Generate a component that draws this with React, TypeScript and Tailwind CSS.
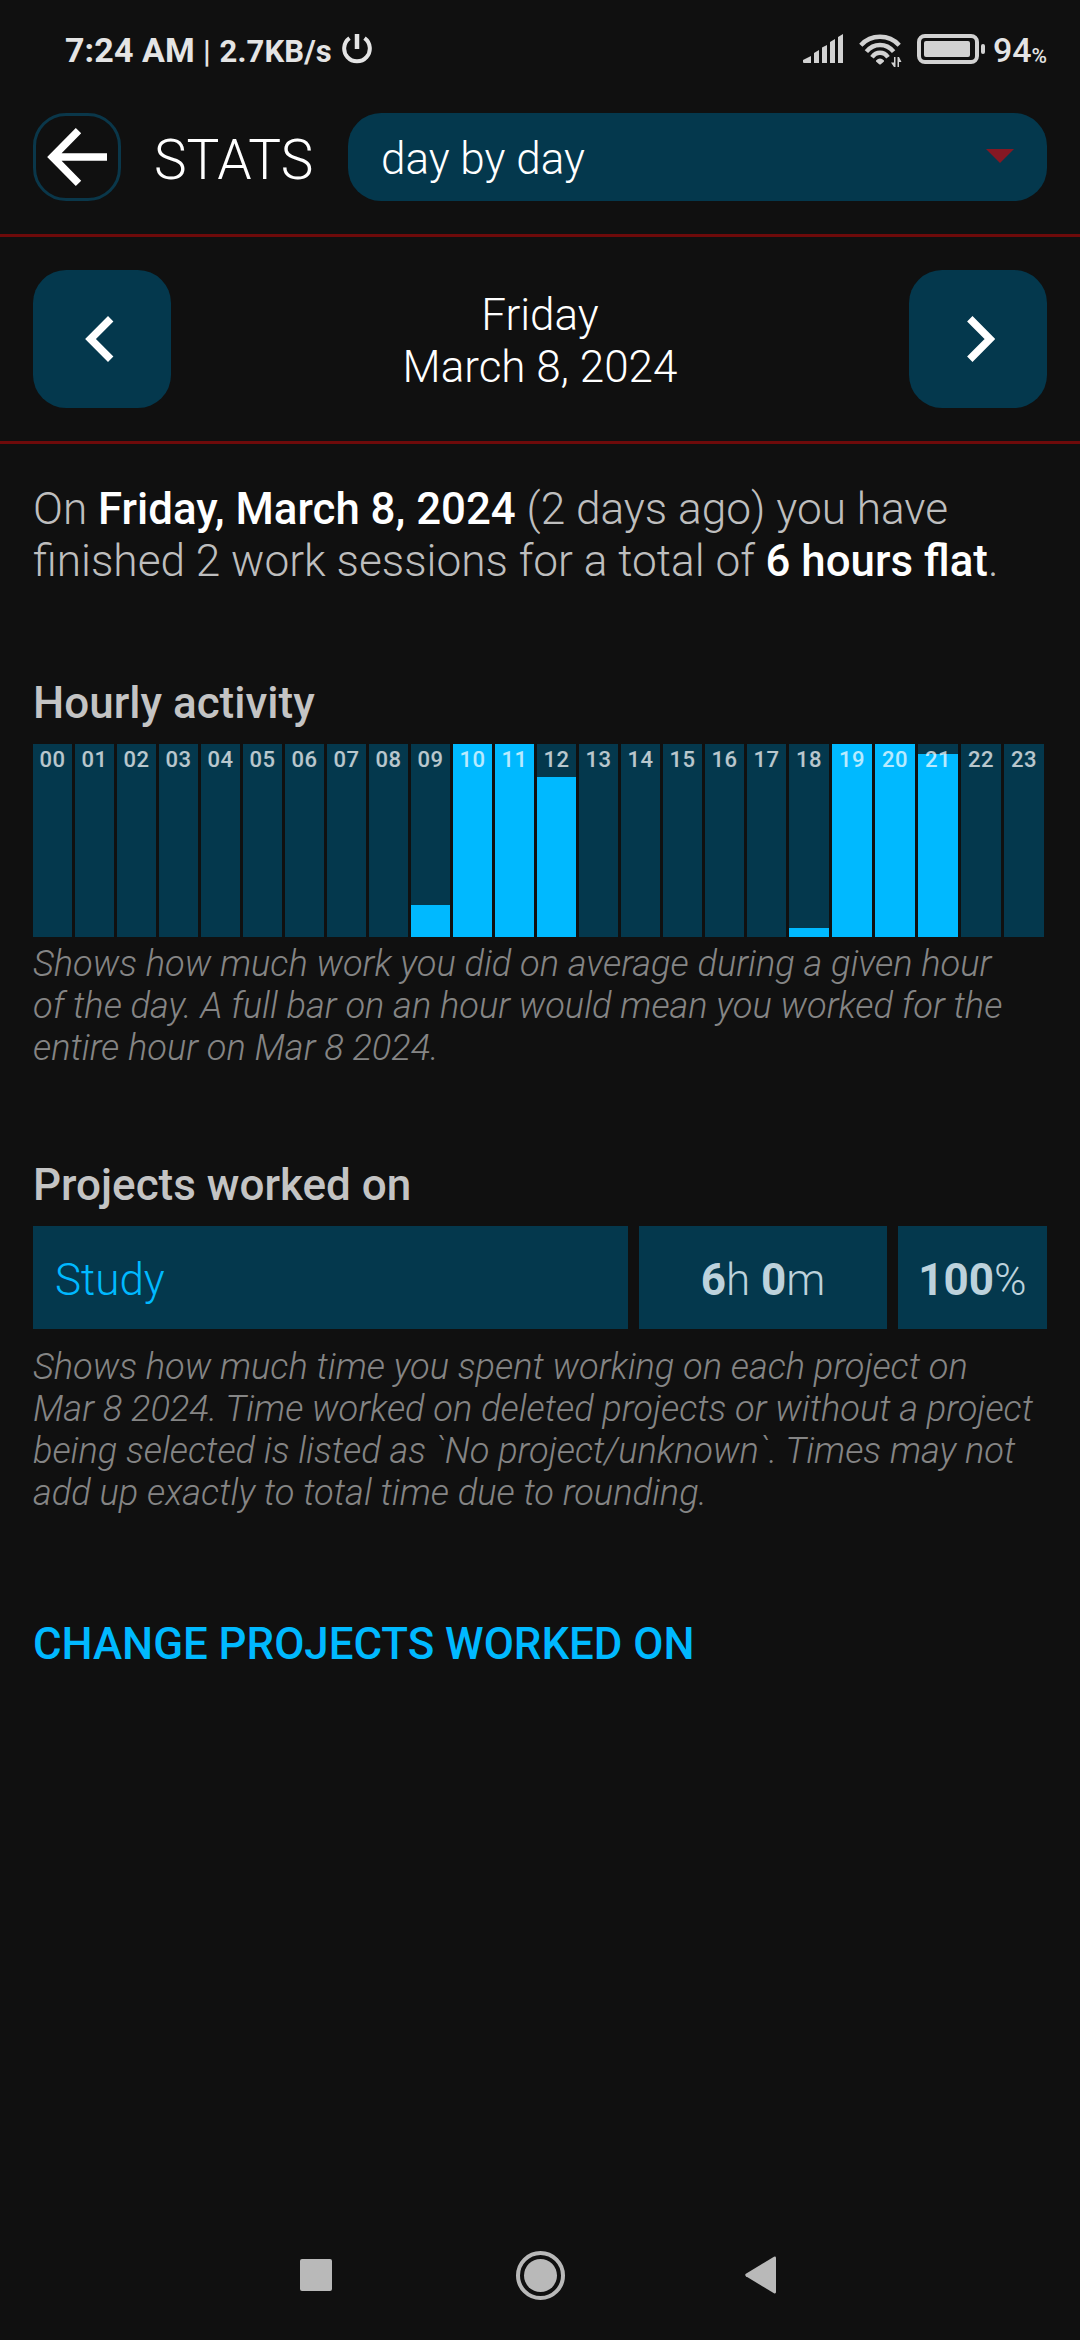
import type { ReactNode } from 'react';

// time worked in each hour, in px of the 193px tall bar
const worked: Record<number, number> = { 9: 32, 10: 193, 11: 193, 12: 160, 18: 9, 19: 193, 20: 193, 21: 183 };

const hours = Array.from({ length: 24 }, (_, i) => ({
  label: String(i).padStart(2, '0'),
  filled: worked[i] ?? 0,
}));

function StatusBar() {
  return (
    <div className="flex h-[113px] items-start justify-between pl-[65px] pr-[33px] text-[#e4e4e4]">
      <div className="flex h-[100px] items-center">
        <span className="text-[34px] font-bold leading-[40px] tracking-[0.1px]">7:24 AM</span>
        <span className="ml-[8px] mt-[3px] text-[31px] font-medium leading-[40px]">|</span>
        <span className="ml-[9px] mt-[3px] text-[31px] font-bold leading-[40px] tracking-[0.1px]">2.7KB/s</span>
        <svg
          className="-mt-[2px] ml-[10px] h-[30px] w-[30px]"
          viewBox="0 0 30 30"
          fill="none"
          stroke="#e4e4e4"
          strokeWidth="4"
        >
          <path d="M7.5 4.2A12.8 12.8 0 1 0 22.5 4.2" />
          <path d="M15 0V15" strokeWidth="4.5" />
        </svg>
      </div>

      <div className="flex h-[100px] items-center">
        <svg className="-mt-[2px] h-[30px] w-10" viewBox="0 0 40 30" fill="#d2d2d2">
          <path d="M0 26L8 22V29H1Q0 29 0 28ZM11 19L16 16V29H11ZM19 13.5L24 11V29H19ZM27 8L32 5V29H27ZM35 3L40 0V29H35Z" />
        </svg>
        <svg className="ml-[15px] mt-[2px] h-[36px] w-[44px]" viewBox="0 0 44 36" fill="none" stroke="#d2d2d2" strokeWidth="4.4">
          <path d="M2.8 12.2Q10.5 3.8 22 3.8T41.2 12.2" />
          <path d="M8.4 18.6Q14 12 22 12T35.6 18.6" />
          <path d="M14 24.2Q17.2 19.8 22 19.8T30 24.2" />
          <path d="M18 27.5Q22 23.5 26 27.5V28.5L22.8 31.2Q22 32 21.2 31.2L18 28.5Z" fill="#d2d2d2" stroke="none" />
          <path d="M37.5 24V34H36L33 29.5H36V24ZM39.5 34V24H41L43.5 29H41V34Z" fill="#d2d2d2" stroke="none" />
        </svg>
        <svg className="-mt-[2px] ml-[15px] h-[30px] w-[68px]" viewBox="0 0 68 30">
          <rect x="2" y="2" width="58" height="26" rx="6" fill="none" stroke="#d2d2d2" strokeWidth="4" />
          <rect x="7" y="7" width="46" height="16" rx="2" fill="#d2d2d2" />
          <rect x="64" y="10" width="4" height="10" rx="2" fill="#d2d2d2" />
        </svg>
        <span className="ml-2 text-[34px] font-medium leading-[40px]">94</span>
        <span className="mt-[11px] text-[21px] font-medium leading-[24px]">%</span>
      </div>
    </div>
  );
}

function Header() {
  return (
    <div className="flex h-[124px] items-start border-b-[3px] border-[#6e0a0a] px-[33px]">
      <button className="flex h-[88px] w-[88px] items-center justify-center rounded-[33px] border-[3px] border-[#0a374a]">
        <svg className="h-[58px] w-[60px]" viewBox="0 0 60 58" fill="none" stroke="#fff" strokeWidth="7.6">
          <path d="M31.5 2.7L5.5 29L31.5 55.3M5 29H60" />
        </svg>
      </button>
      <h1 className="ml-[33px] w-[194px] text-[55px] font-light leading-[94px]">STATS</h1>
      <div className="flex h-[88px] flex-1 items-center justify-between rounded-[33px] bg-[#04384d] px-[33px]">
        <span className="pt-1 text-[44px] font-light leading-[52px]">day by day</span>
        <svg className="-mt-[2px] h-[14px] w-[28px]" viewBox="0 0 28 14" fill="#851823">
          <path d="M0 0H28L14 14Z" />
        </svg>
      </div>
    </div>
  );
}

function DayButton({ path }: { path: string }) {
  return (
    <button className="flex h-[138px] w-[138px] items-center justify-center rounded-[33px] bg-[#04384d]">
      <svg className="h-[46px] w-[34px]" viewBox="0 0 34 46" fill="none" stroke="#fff" strokeWidth="7.6">
        <path d={path} />
      </svg>
    </button>
  );
}

function DayPicker() {
  return (
    <div className="flex h-[207px] items-center justify-between border-b-[3px] border-[#6e0a0a] px-[33px]">
      <DayButton path="M25.7 2.7L5.5 23L25.7 43.3" />
      <p className="pt-1 text-center text-[44px] font-light leading-[52px]">
        Friday
        <br />
        March 8, 2024
      </p>
      <DayButton path="M8.8 2.7L29 23L8.8 43.3" />
    </div>
  );
}

function Heading({ children }: { children: ReactNode }) {
  return <h2 className="text-[44px] font-medium leading-[52px] text-[#c4c4c4]">{children}</h2>;
}

function Caption({ children }: { children: ReactNode }) {
  return <p className="whitespace-nowrap text-[36.2px] font-light italic leading-[42px] text-[#858585]">{children}</p>;
}

function HourlyChart() {
  return (
    <div className="mt-[15px] flex h-[193px] gap-[3px]">
      {hours.map((hour, i) => (
        <div
          key={hour.label}
          className={`relative flex flex-col justify-end bg-[#04384d] ${i < 18 ? 'w-[39px]' : 'w-[40px]'}`}
        >
          <div className="bg-[#00b9ff]" style={{ height: hour.filled }} />
          <span className="absolute inset-x-0 top-[3px] text-center text-[22px] font-medium leading-[26px] tracking-[0.6px] text-white/72">
            {hour.label}
          </span>
        </div>
      ))}
    </div>
  );
}

function ProjectRow() {
  return (
    <div className="mt-[15px] flex h-[103px] gap-[11px] text-[44px] font-light leading-[52px] text-[#bdd2dc]">
      <div className="flex w-[595px] items-center bg-[#04384d] pl-[22px] pt-1 text-[#00b9ff]">Study</div>
      <div className="flex w-[248px] items-center justify-center bg-[#04384d] pt-1">
        <p>
          <b className="font-bold">6</b>h <b className="font-bold">0</b>m
        </p>
      </div>
      <div className="flex w-[149px] items-center justify-center bg-[#04384d] pt-1">
        <p>
          <b className="font-bold">100</b>%
        </p>
      </div>
    </div>
  );
}

function SystemNav() {
  return (
    <div className="mt-auto flex h-[130px] items-center justify-between pl-[300px] pr-[304px]">
      <div className="h-8 w-8 rounded-[2px] bg-[#b9b9b9]" />
      <div className="ml-1 flex h-[49px] w-[49px] items-center justify-center rounded-full border-4 border-[#b9b9b9]">
        <div className="h-[33px] w-[33px] rounded-full bg-[#b9b9b9]" />
      </div>
      <svg className="h-[38px] w-[31px]" viewBox="0 0 31 38" fill="#b9b9b9">
        <path d="M29 .7L.9 17.8Q-.5 19 .9 20.2L29 37.3Q31 38 31 36V2Q31 0 29 .7Z" />
      </svg>
    </div>
  );
}

export default function App() {
  return (
    <div className="flex h-[2340px] w-[1080px] flex-col overflow-hidden bg-[#101010] font-['Roboto',sans-serif] text-white">
      <StatusBar />
      <Header />
      <DayPicker />

      <main className="px-[33px] pt-[39px]">
        <p className="whitespace-nowrap text-[44.2px] font-light leading-[52px] text-[#bebebe]">
          On <b className="text-[43.8px] font-medium text-white">Friday, March 8, 2024</b> (2 days ago) you have
          <br />
          finished 2 work sessions for a total of <b className="text-[43.8px] font-medium text-white">6 hours flat</b>.
        </p>

        <section className="mt-[90px]">
          <Heading>Hourly activity</Heading>
          <HourlyChart />
          <div className="mt-[6px]">
            <Caption>
              Shows how much work you did on average during a given hour
              <br />
              of the day. A full bar on an hour would mean you worked for the
              <br />
              entire hour on Mar 8 2024.
            </Caption>
          </div>
        </section>

        <section className="mt-[90px]">
          <Heading>Projects worked on</Heading>
          <ProjectRow />
          <div className="mt-[17px]">
            <Caption>
              Shows how much time you spent working on each project on
              <br />
              Mar 8 2024. Time worked on deleted projects or without a project
              <br />
              being selected is listed as `No project/unknown`. Times may not
              <br />
              add up exactly to total time due to rounding.
            </Caption>
          </div>
        </section>

        <button className="mt-[104px] block text-[43.8px] font-medium leading-[52px] text-[#00b9ff]">
          CHANGE PROJECTS WORKED ON
        </button>
      </main>

      <SystemNav />
    </div>
  );
}
